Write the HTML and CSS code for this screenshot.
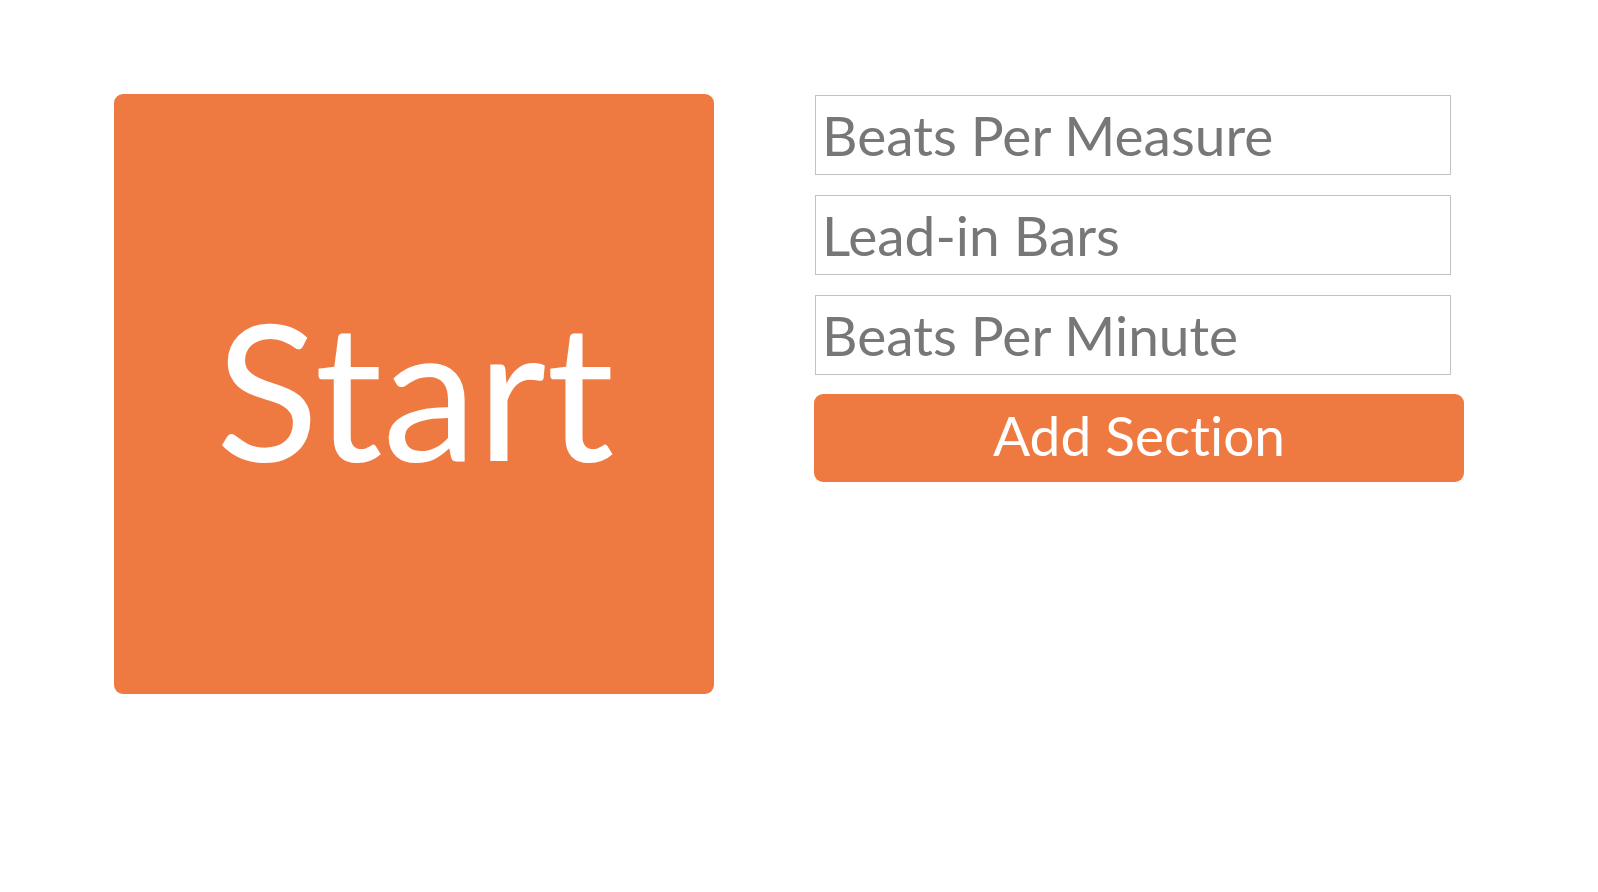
FILE: index.html
```html
<!DOCTYPE html>
<html lang="en">
<head>
<meta charset="utf-8">
<title>Metronome</title>
<link rel="stylesheet" href="styles.css">
</head>
<body>
<main class="page">
  <button class="start" type="button">Start</button>
  <form class="settings">
    <input class="field" type="text" placeholder="Beats Per Measure">
    <input class="field" type="text" placeholder="Lead-in Bars">
    <input class="field" type="text" placeholder="Beats Per Minute">
    <button class="add" type="button">Add Section</button>
  </form>
</main>
</body>
</html>
```

FILE: styles.css
```css
html, body {
  margin: 0;
  padding: 0;
  background: #ffffff;
}

body {
  font-family: Lato, "Open Sans", "Liberation Sans", sans-serif;
  font-variant-ligatures: none;
}

.page {
  display: flex;
  align-items: flex-start;
  padding: 94px 0 0 114px;
  gap: 100px;
}

.start {
  width: 600px;
  height: 600px;
  flex: none;
  border: none;
  border-radius: 9px;
  background: #ef7a41;
  color: #ffffff;
  font-family: inherit;
  font-variant-ligatures: none;
  font-size: 190px;
  font-weight: 400;
  padding: 0 0 14px 2px;
  margin: 0;
  cursor: pointer;
}

.settings {
  display: flex;
  flex-direction: column;
  width: 650px;
  padding-top: 1px;
  margin: 0;
}

.field {
  box-sizing: border-box;
  width: 636px;
  height: 80px;
  margin: 0 0 20px 1px;
  padding: 0 7px 1px 6px;
  border: 1px solid #c2c2c2;
  border-radius: 0;
  font-family: inherit;
  font-variant-ligatures: none;
  font-size: 55px;
  color: #777777;
  background: #ffffff;
  outline: none;
}

.field::placeholder {
  color: #777777;
  opacity: 1;
}

.add {
  box-sizing: border-box;
  width: 650px;
  height: 88px;
  margin: -1px 0 0 0;
  border: none;
  border-radius: 9px;
  background: #ef7a41;
  color: #ffffff;
  font-family: inherit;
  font-variant-ligatures: none;
  font-size: 55px;
  font-weight: 400;
  padding: 0 0 6px;
  cursor: pointer;
}
```
